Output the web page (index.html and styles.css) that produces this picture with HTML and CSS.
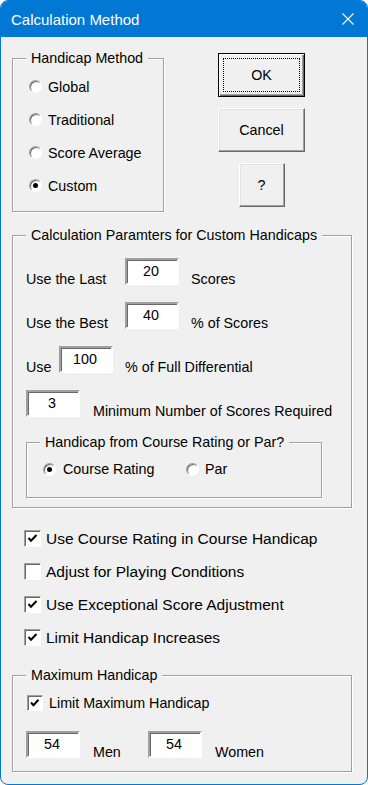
FILE: index.html
```html
<!DOCTYPE html>
<html>
<head>
    <meta charset="utf-8">
    <title>Calculation Method</title>
    <link rel="stylesheet" href="styles.css">
</head>
<body>
<div class="dlg">
    <div class="caption">
        <span class="caption-text">Calculation Method</span>
        <span class="close">
            <svg width="12" height="12" viewBox="0 0 12 12"><path d="M0.5 0.5L11.5 11.5M11.5 0.5L0.5 11.5" stroke="#fff" stroke-width="1.1" fill="none"/></svg>
        </span>
    </div>
    <div class="client">
        <div class="top">
            <fieldset class="grp grp-method">
                <legend>Handicap Method</legend>
                <div class="opt"><span class="radio"></span>Global</div>
                <div class="opt"><span class="radio"></span>Traditional</div>
                <div class="opt"><span class="radio"></span>Score Average</div>
                <div class="opt"><span class="radio on"></span>Custom</div>
            </fieldset>
            <div class="cmds">
                <div class="btn btn-default"><span class="focus">OK</span></div>
                <div class="btn">Cancel</div>
                <div class="btn btn-sq">?</div>
            </div>
        </div>

        <fieldset class="grp grp-custom">
            <legend>Calculation Paramters for Custom Handicaps</legend>
            <div class="row">
                <span class="lbl lbl-w">Use the Last</span>
                <span class="edit">20</span>
                <span class="lbl after">Scores</span>
            </div>
            <div class="row">
                <span class="lbl lbl-w">Use the Best</span>
                <span class="edit">40</span>
                <span class="lbl after">% of Scores</span>
            </div>
            <div class="row">
                <span class="lbl lbl-s">Use</span>
                <span class="edit">100</span>
                <span class="lbl after">% of Full Differential</span>
            </div>
            <div class="row">
                <span class="edit">3</span>
                <span class="lbl after2">Minimum Number of Scores Required</span>
            </div>
            <fieldset class="grp grp-rating">
                <legend>Handicap from Course Rating or Par?</legend>
                <div class="opts">
                    <div class="opt opt-inline"><span class="radio on"></span>Course Rating</div>
                    <div class="opt opt-inline"><span class="radio"></span>Par</div>
                </div>
            </fieldset>
        </fieldset>

        <div class="checks">
            <div class="chk"><span class="box"><svg width="15" height="15" viewBox="0 0 15 15"><path d="M3.5 7L6 9.8L11.5 4" stroke="#000" stroke-width="2" fill="none"/></svg></span>Use Course Rating in Course Handicap</div>
            <div class="chk"><span class="box"></span>Adjust for Playing Conditions</div>
            <div class="chk"><span class="box"><svg width="15" height="15" viewBox="0 0 15 15"><path d="M3.5 7L6 9.8L11.5 4" stroke="#000" stroke-width="2" fill="none"/></svg></span>Use Exceptional Score Adjustment</div>
            <div class="chk"><span class="box"><svg width="15" height="15" viewBox="0 0 15 15"><path d="M3.5 7L6 9.8L11.5 4" stroke="#000" stroke-width="2" fill="none"/></svg></span>Limit Handicap Increases</div>
        </div>

        <fieldset class="grp grp-max">
            <legend>Maximum Handicap</legend>
            <div class="chk chk-sm"><span class="box"><svg width="14" height="14" viewBox="0 0 14 14"><path d="M3 6.5L5.5 9.2L10.5 3.8" stroke="#000" stroke-width="2" fill="none"/></svg></span>Limit Maximum Handicap</div>
            <div class="row row-max">
                <span class="edit">54</span>
                <span class="lbl after2 lbl-men">Men</span>
                <span class="edit">54</span>
                <span class="lbl after2">Women</span>
            </div>
        </fieldset>
    </div>
</div>
</body>
</html>
```

FILE: styles.css
```css
html, body { margin: 0; padding: 0; background: #fff; }
body { font-family: "Liberation Sans", Arial, sans-serif; font-size: 14.3px; color: #000; }

.dlg { width: 368px; height: 785px; box-sizing: border-box; border: 1px solid #0078d4; border-radius: 8px; overflow: hidden; background: #f0f0f0; }
.caption { height: 36px; background: #0078d4; color: #fff; display: flex; align-items: center; justify-content: space-between; padding: 0 13px 0 10px; margin-top: -1px; padding-top: 1px; }
.caption-text { font-size: 15px; }
.close { display: flex; width: 12px; height: 12px; }

.client { padding-top: 13px; }
.top { display: flex; align-items: flex-start; }

/* group boxes */
.grp { margin: 0; padding: 0; min-width: 0; box-sizing: border-box; border: 1px solid #a0a0a0; box-shadow: 1px 1px 0 #fff, inset 1px 1px 0 #fff; }
.grp legend { margin-left: 0; padding: 0 5px; line-height: 16px; background: #f0f0f0; }
.grp-method { width: 152px; margin-left: 11px; padding: 4px 0 9px 16px; }
.grp-method legend, .grp-rating legend { margin-left: -3px; }
.grp-custom { width: 340px; margin: 15px 0 0 11px; padding: 15px 0 9px 13px; }
.grp-rating { width: 296px; margin-top: 17px; padding: 11px 0 20px 16px; }
.grp-max { width: 340px; margin: 13px 0 0 11px; padding: 12px 0 13px 13px; }

/* radios */
.opt { display: flex; align-items: center; height: 33px; }
.radio { width: 13px; height: 13px; box-sizing: border-box; border-radius: 50%; background: #fff; border: 1px solid; border-color: #a0a0a0 #fff #fff #a0a0a0; box-shadow: inset 1px 1px 0 #696969; margin-right: 6px; display: flex; align-items: center; justify-content: center; }
.radio.on::after { content: ""; width: 5px; height: 5px; border-radius: 50%; background: #000; }
.opts { display: flex; }
.opt-inline { height: 16px; }
.opt-inline:first-child { width: 143px; }
.opt-inline:first-child .radio { margin-right: 7px; }

/* buttons */
.cmds { margin: 3px 0 0 54px; width: 87px; display: flex; flex-direction: column; align-items: center; gap: 11px; }
.btn { width: 87px; height: 44px; box-sizing: border-box; background: #f0f0f0; border: 1px solid; border-color: #fff #696969 #696969 #fff; box-shadow: inset -1px -1px 0 #a0a0a0, inset 1px 1px 0 #e3e3e3; display: flex; align-items: center; justify-content: center; }
.btn-default { border: 1px solid #000; box-shadow: inset 1px 1px 0 #fff, inset -1px -1px 0 #696969, inset -2px -2px 0 #a0a0a0; padding: 4px; }
.btn-default .focus { flex: 1; align-self: stretch; border: 1px dotted #000; display: flex; align-items: center; justify-content: center; }
.btn-sq { width: 46px; }

/* edit rows */
.row { display: flex; align-items: flex-start; height: 27px; margin-bottom: 17px; }
.row:nth-of-type(4) { margin-bottom: 0; }
.lbl { padding-top: 13px; line-height: 16px; white-space: nowrap; }
.lbl-w { width: 99px; }
.lbl-s { width: 33px; }
.after { margin-left: 12px; }
.after2 { margin-left: 13px; }
.edit { width: 54px; height: 27px; box-sizing: border-box; background: #fff; border: 2px solid; border-color: #a0a0a0 #fff #fff #a0a0a0; box-shadow: inset 1px 1px 0 #696969; text-align: center; line-height: 22px; padding-right: 2px; }

/* check boxes */
.checks { margin: 14px 0 0 23px; }
.chk { display: flex; align-items: center; height: 33px; font-size: 15.5px; }
.box { width: 17px; height: 17px; box-sizing: border-box; background: #fff; border: 1px solid; border-color: #a0a0a0 #fff #fff #a0a0a0; box-shadow: inset 1px 1px 0 #696969; margin-right: 5px; display: flex; }
.chk-sm { height: 16px; font-size: 14.3px; margin-left: 1px; }
.chk-sm .box { width: 16px; height: 16px; margin-right: 6px; }
.row-max { margin: 20px 0 0; }
.lbl-men { width: 28px; margin-right: 27px; }
```
